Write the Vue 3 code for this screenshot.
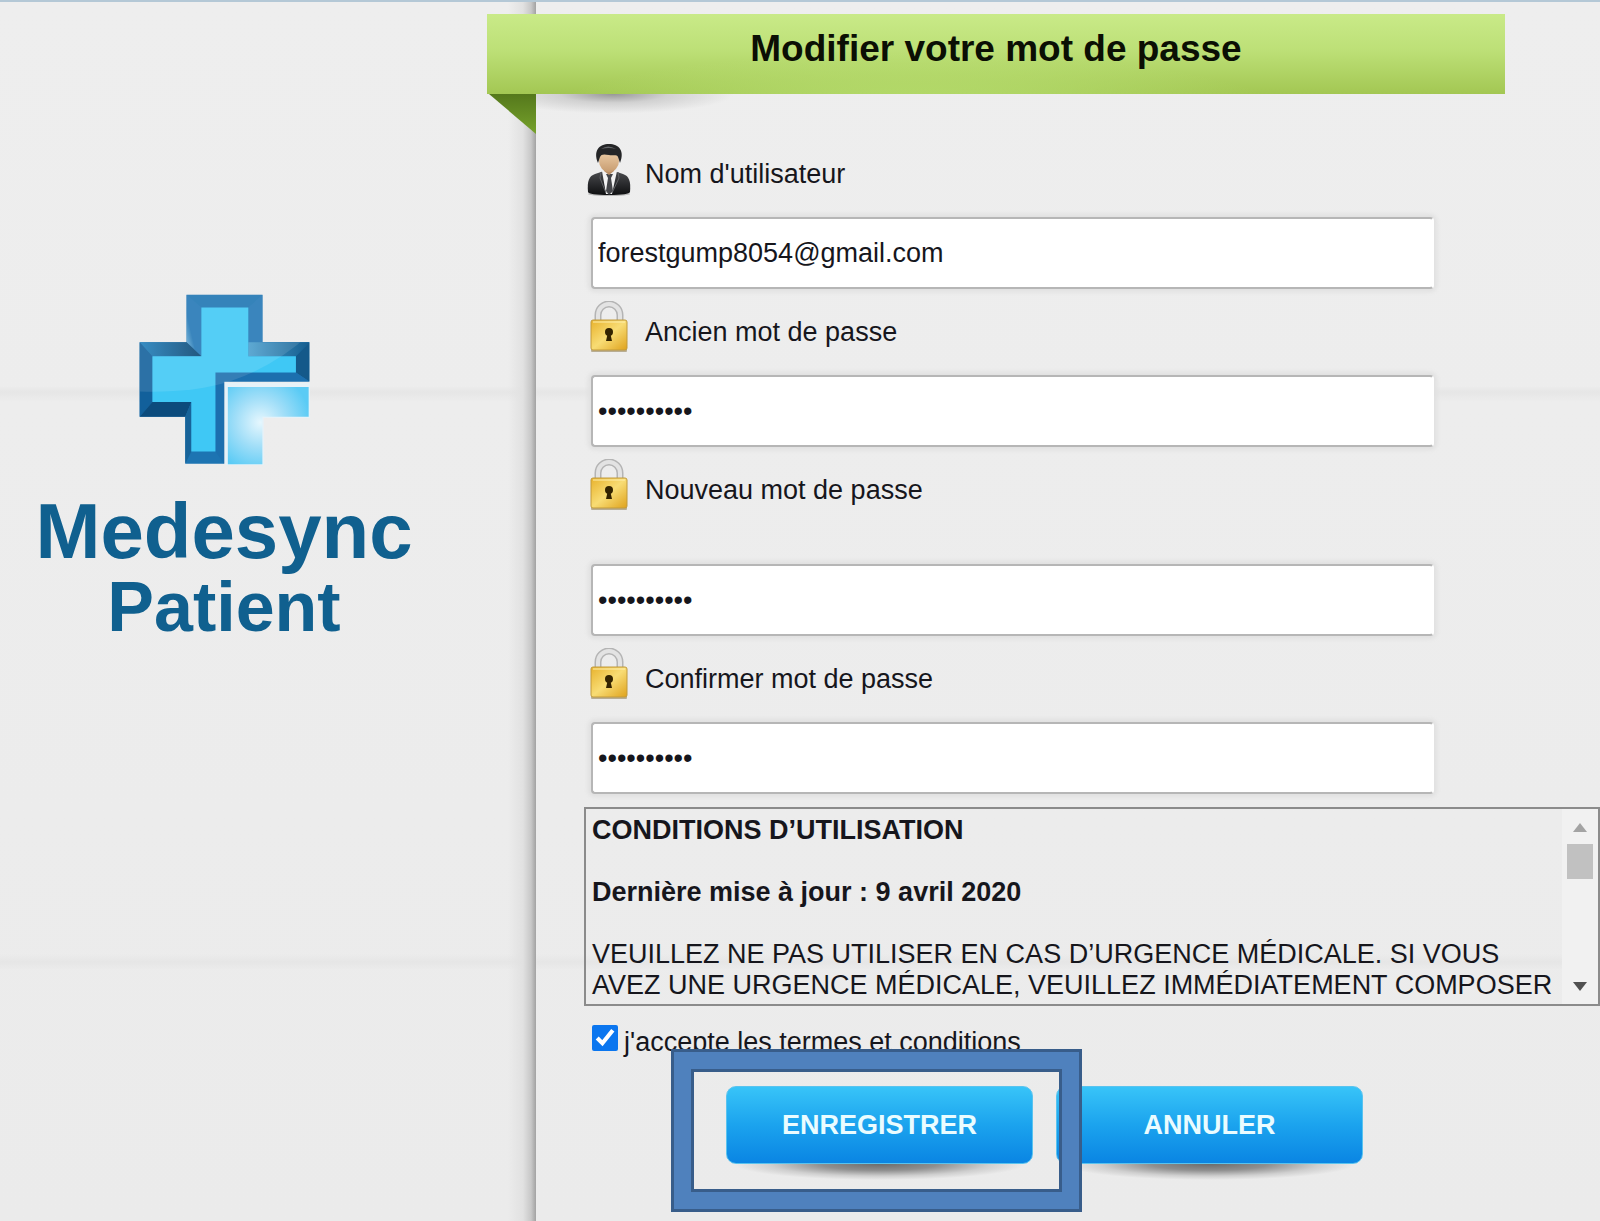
<template>
  <div class="page">
    <aside class="brand">
      <svg class="brand__logo" viewBox="58 42 510 510" role="img" aria-label="Medesync">
        <defs>
          <linearGradient id="rim-top" x1="0" y1="1" x2="1" y2="0">
            <stop offset="0" stop-color="#7fbde0" />
            <stop offset="0.35" stop-color="#2277b5" />
            <stop offset="1" stop-color="#2277b5" />
          </linearGradient>
          <linearGradient id="rim-right" x1="0" y1="0" x2="1" y2="0">
            <stop offset="0" stop-color="#4a9fce" />
            <stop offset="1" stop-color="#155d8e" />
          </linearGradient>
          <linearGradient id="rim-dark" x1="0" y1="0" x2="1" y2="0">
            <stop offset="0" stop-color="#2080bd" />
            <stop offset="1" stop-color="#08436f" />
          </linearGradient>
          <radialGradient id="corner" gradientUnits="userSpaceOnUse" cx="420" cy="425" r="150">
            <stop offset="0" stop-color="#e6f7fe" />
            <stop offset="0.5" stop-color="#a0def8" />
            <stop offset="1" stop-color="#5acbf5" />
          </radialGradient>
          <clipPath id="cross">
            <path d="M200 44H426V186H566V303H312V548H196V408H60V186H200Z" />
          </clipPath>
        </defs>
        <path fill="#1d74b2" d="M200 44H426V186H566V303H312V548H196V408H60V186H200Z" />
        <path fill="url(#rim-top)" d="M200 44L244 82V228L200 186Z" />
        <path fill="#2277b5" d="M426 44V186H566L526 228H384V82Z" />
        <path fill="url(#rim-right)" d="M384 186H566L526 228H384Z" />
        <path fill="#14598a" d="M566 186V303L526 276V228Z" />
        <path fill="url(#rim-dark)" d="M60 186H200L244 228H98Z" />
        <path fill="#12609b" d="M60 186L98 228V364L60 408Z" />
        <path fill="#0c4b7c" d="M60 408L98 364H214L196 408Z" />
        <path fill="#176399" d="M196 408L214 364V512L196 548Z" />
        <path fill="#1c6fae" d="M286 276H526L566 303H312V548L286 512Z" />
        <path fill="#3fc8f5" d="M244 82H384V228H526V276H286V512H214V364H98V228H244Z" />
        <g clip-path="url(#cross)">
          <path fill="#fff" fill-opacity="0.11" d="M40 30H580V150Q470 255 330 302Q210 340 40 332Z" />
        </g>
        <path fill="#e6f2f8" d="M315 307H568V412H430V552H315Z" />
        <path fill="url(#corner)" d="M323 319H564V408H426V550H323Z" />
      </svg>
      <h1 class="brand__name">
        <span class="brand__first">Medesync</span>
        <span class="brand__second">Patient</span>
      </h1>
    </aside>

    <main class="content">
      <h2 class="ribbon">Modifier votre mot de passe</h2>

      <form class="form" @submit.prevent>
        <div
          v-for="field in fields"
          :key="field.id"
          class="field"
          :class="{ 'field--spaced': field.spaced }"
        >
          <label class="field__label" :for="field.id">
            <svg v-if="field.icon === 'user'" class="field__icon" viewBox="0 0 50 54" aria-hidden="true">
              <defs>
                <linearGradient id="suit" x1="0" y1="0" x2="0" y2="1">
                  <stop offset="0" stop-color="#4b4c4f" />
                  <stop offset="1" stop-color="#0e0f11" />
                </linearGradient>
                <linearGradient id="face" x1="0" y1="0" x2="0" y2="1">
                  <stop offset="0" stop-color="#efd0aa" />
                  <stop offset="1" stop-color="#c79c70" />
                </linearGradient>
              </defs>
              <ellipse cx="25" cy="51" rx="21" ry="2" fill="#b9b9b9" />
              <path fill="url(#suit)" d="M4 49C3 38 5 33 11 31L20 28H30L39 31C45 33 47 38 46 49Q45 52 25 52Q5 52 4 49Z" />
              <path fill="#f3f3f3" d="M18 28L22 51H28L33 28Z" />
              <path fill="#45464a" d="M22 31H29L27 35L29 48L25 52L22 48L24 35Z" />
              <path fill="none" stroke="#606165" d="M17 29L16 35L22 50M34 29L35 35L28 50" />
              <path fill="#b98e65" d="M20 23H30V28L25 32L20 28Z" />
              <ellipse cx="25" cy="18" rx="10" ry="11" fill="url(#face)" />
              <path fill="#242527" d="M14 20C9 8 15 1 25 1S41 8 36 20L34 14C33 11 28 13 25 12C20 11 17 11 16 14Z" />
              <path fill="#66686b" d="M17 6Q24 1 32 6Q25 4 17 6Z" />
            </svg>
            <svg v-else class="field__icon" viewBox="0 2 50 54" aria-hidden="true">
              <defs>
                <linearGradient id="brass" x1="0" y1="0" x2="1" y2="1">
                  <stop offset="0" stop-color="#e8b22c" />
                  <stop offset="0.5" stop-color="#f8dc74" />
                  <stop offset="1" stop-color="#dfa21c" />
                </linearGradient>
              </defs>
              <path fill="none" stroke="#b4b4b4" stroke-width="7" d="M14 24V16A11 11 0 0 1 36 16V24" />
              <path fill="none" stroke="#e3e3e3" stroke-width="4" d="M14 24V16A11 11 0 0 1 36 16V24" />
              <rect x="7" y="50" width="36" height="3" rx="1" fill="#b8ad93" />
              <rect x="7" y="21" width="36" height="30" rx="2" fill="url(#brass)" stroke="#c09a3c" />
              <path stroke="#fff0ad" d="M9 23H41" />
              <circle cx="25" cy="33" r="4" fill="#332300" />
              <path fill="#332300" d="M24 33H26L28 42H22Z" />
            </svg>
            <span>{{ field.label }}</span>
          </label>
          <input
            :id="field.id"
            v-model="field.value"
            class="field__input"
            :type="field.icon === 'user' ? 'text' : 'password'"
            autocomplete="off"
          />
        </div>

        <section class="terms" aria-label="Conditions d’utilisation">
          <div class="terms__text" tabindex="0">
            <p><strong>CONDITIONS D’UTILISATION</strong></p>
            <p><strong>Dernière mise à jour : 9 avril 2020</strong></p>
            <p>
              VEUILLEZ NE PAS UTILISER EN CAS D’URGENCE MÉDICALE. SI VOUS
              AVEZ UNE URGENCE MÉDICALE, VEUILLEZ IMMÉDIATEMENT COMPOSER
            </p>
          </div>
          <div class="terms__scroll" aria-hidden="true">
            <svg viewBox="0 0 14 9"><path fill="#a3a3a3" d="M0 9L7 0L14 9Z" /></svg>
            <span class="terms__thumb"></span>
            <svg class="terms__down" viewBox="0 0 14 9"><path fill="#505050" d="M0 0H14L7 9Z" /></svg>
          </div>
        </section>

        <label class="accept">
          <input v-model="accepted" class="accept__box" type="checkbox" />
          <span>j'accepte les termes et conditions</span>
        </label>

        <div class="actions">
          <div class="actions__item actions__item--marked">
            <button class="btn" type="submit">ENREGISTRER</button>
          </div>
          <div class="actions__item">
            <button class="btn" type="button">ANNULER</button>
          </div>
        </div>
      </form>
    </main>
  </div>
</template>

<script setup>
  import { reactive, ref } from 'vue'

  const accepted = ref(true)

  const fields = reactive([
    { id: 'username', label: "Nom d'utilisateur", icon: 'user', value: 'forestgump8054@gmail.com' },
    { id: 'old-password', label: 'Ancien mot de passe', icon: 'lock', value: 'motdepasse' },
    { id: 'new-password', label: 'Nouveau mot de passe', icon: 'lock', value: 'nouveau123', spaced: true },
    { id: 'confirm-password', label: 'Confirmer mot de passe', icon: 'lock', value: 'nouveau123' },
  ])
</script>

<style>
  body {
    margin: 0;
    background: #ececec;
  }
</style>

<style scoped>
  .page {
    display: grid;
    grid-template-columns: 33.5% 1fr;
    box-sizing: border-box;
    min-height: 100vh;
    border-top: 2px solid #b4c8d6;
    overflow: hidden;
    color: #16161c;
    font-family: 'Liberation Sans', Arial, sans-serif;
    font-size: 27px;
    line-height: 31px;
    background:
      linear-gradient(transparent, #e6e6e6 6px, transparent 16px) 0 384px / 100% 16px no-repeat,
      linear-gradient(transparent, #e6e6e6 8px, transparent 16px) 0 952px / 100% 16px no-repeat,
      linear-gradient(#eeeeee, #ebebeb);
  }

  .brand {
    display: flex;
    flex-direction: column;
    align-items: center;
    padding: 292px 88px 0 0;
    background: linear-gradient(to left, #a2a2a2, #c8c8c8 5px, #e1e1e1 13px, transparent 28px);
  }

  .brand__logo {
    width: 171px;
    height: 171px;
  }

  .brand__name {
    display: flex;
    flex-direction: column;
    align-items: center;
    margin: 28px 0 0;
    color: #10608f;
    line-height: 76px;
  }

  .brand__first {
    font-size: 78px;
  }

  .brand__second {
    font-size: 70px;
  }

  .content {
    min-width: 0;
    padding-top: 12px;
  }

  .ribbon {
    position: relative;
    margin: 0 95px 0 -49px;
    height: 80px;
    color: #0b0f04;
    font-size: 37px;
    line-height: 70px;
    text-align: center;
    background:
      radial-gradient(ellipse at 42% 130%, rgba(192, 232, 124, 0.8), transparent 45%),
      linear-gradient(#c9ea88, #bde077 45%, #a3c753);
  }

  .ribbon::before {
    content: '';
    position: absolute;
    top: 100%;
    left: 0;
    width: 49px;
    height: 40px;
    background: linear-gradient(#55781c, #76a22b);
    clip-path: polygon(2px 0, 100% 0, 100% 100%);
  }

  .ribbon::after {
    content: '';
    position: absolute;
    top: 100%;
    left: 49px;
    width: 220px;
    height: 26px;
    background: radial-gradient(ellipse 55% 75% at 35% 0, #979797, rgba(190, 190, 190, 0.6) 45%, transparent);
  }

  .form {
    padding: 37px 0 0 48px;
  }

  .field {
    width: 84%;
  }

  .field--spaced .field__label {
    margin-bottom: 31px;
  }

  .field__label {
    display: flex;
    align-items: center;
    gap: 11px;
    height: 86px;
  }

  .field__icon {
    width: 50px;
    height: 54px;
    margin-bottom: 8px;
  }

  .field__input {
    display: block;
    box-sizing: border-box;
    width: calc(100% - 10px);
    height: 72px;
    margin-left: 7px;
    padding: 0 5px;
    border: 2px solid #b6b6b6;
    border-right-color: #fff;
    border-radius: 4px;
    outline: none;
    color: #16161c;
    font: inherit;
    background: #fff;
    box-shadow: 0 0 4px 3px #e0e0e0;
  }

  .terms {
    display: flex;
    box-sizing: border-box;
    height: 199px;
    margin: 13px 0 0;
    border: 2px solid #8b8b8b;
  }

  .terms__text {
    flex: 1;
    padding: 6px 0 0 6px;
    overflow: hidden;
  }

  .terms__text p {
    margin: 0 0 31px;
  }

  .terms__scroll {
    display: flex;
    flex-direction: column;
    align-items: center;
    box-sizing: border-box;
    width: 36px;
    padding: 14px 0 13px;
    background: #f1f1f1;
  }

  .terms__scroll svg {
    width: 14px;
    height: 9px;
  }

  .terms__thumb {
    width: 26px;
    height: 35px;
    margin-top: 12px;
    background: #c1c1c1;
  }

  .terms__down {
    margin-top: auto;
  }

  .accept {
    display: flex;
    gap: 6px;
    margin: 19px 0 0 8px;
  }

  .accept__box {
    width: 26px;
    height: 26px;
    margin: 0;
    accent-color: #0b76ef;
  }

  .accept span {
    padding-top: 2px;
  }

  .actions {
    display: flex;
    gap: 23px;
    margin: 28px 0 0 142px;
  }

  .actions__item {
    position: relative;
    width: 307px;
  }

  .actions__item::before {
    content: '';
    position: absolute;
    top: 100%;
    left: 8px;
    right: 8px;
    height: 16px;
    background: radial-gradient(ellipse 50% 100% at 50% 0, #6c6c6c, #8f8f8f 40%, #cfcfcf 75%, transparent);
  }

  /* frame drawn over the save button and its surroundings */
  .actions__item--marked::after {
    content: '';
    position: absolute;
    z-index: 1;
    inset: -37px -49px -48px -55px;
    border: 3px solid #385d8a;
    outline: 3px solid #385d8a;
    outline-offset: -23px;
    box-shadow: inset 0 0 0 18px #4f81bd;
    pointer-events: none;
  }

  .btn {
    position: relative;
    width: 100%;
    height: 78px;
    padding: 0;
    border: 1px solid #59c3ef;
    border-radius: 10px;
    color: #eafcff;
    font: inherit;
    font-weight: 700;
    background: linear-gradient(#38c4f8, #1ba3ee 50%, #0a85e3);
    cursor: pointer;
  }
</style>
